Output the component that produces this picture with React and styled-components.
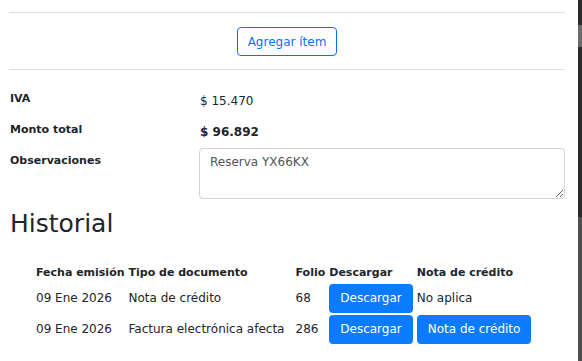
import React from "react";
import styled, { createGlobalStyle } from "styled-components";

const FONT = `"DejaVu Sans", "Open Sans", sans-serif`;

const HISTORY = [
  { id: 1, date: "09 Ene 2026", type: "Nota de crédito", folio: "68", credit: null },
  { id: 2, date: "09 Ene 2026", type: "Factura electrónica afecta", folio: "286", credit: "Nota de crédito" },
];

const GlobalStyle = createGlobalStyle`
  body {
    margin: 0;
    background: #fff;
    font-family: ${FONT};
    color: #212529;
  }
`;

const Page = () => {
  return (
    <Frame>
      <GlobalStyle />
      <Content>
        <Divider />
        <AddRow>
          <OutlineBtn>Agregar ítem</OutlineBtn>
        </AddRow>
        <Divider />
        <Summary>
          <Label>IVA</Label>
          <Value>$ 15.470</Value>
          <Label>Monto total</Label>
          <Value bold>$ 96.892</Value>
          <Label>Observaciones</Label>
          <Notes defaultValue="Reserva YX66KX" />
        </Summary>
        <Heading>Historial</Heading>
        <Table>
          <thead>
            <tr>
              <Th>Fecha emisión</Th>
              <Th $w={163}>Tipo de documento</Th>
              <Th>Folio</Th>
              <Th>Descargar</Th>
              <Th>Nota de crédito</Th>
            </tr>
          </thead>
          <tbody>
            {HISTORY.map(item => (
              <tr key={item.id}>
                <Td>{item.date}</Td>
                <Td>{item.type}</Td>
                <Td>{item.folio}</Td>
                <Td><SolidBtn>Descargar</SolidBtn></Td>
                <Td>{item.credit ? <SolidBtn>{item.credit}</SolidBtn> : "No aplica"}</Td>
              </tr>
            ))}
          </tbody>
        </Table>
      </Content>
      <Backdrop />
    </Frame>
  );
};

const Frame = styled.div`
  display: flex;
  width: 582px;
  height: 361px;
  overflow: hidden;
`;

const Content = styled.div`
  flex: 1;
  padding: 12px 13px 0 9px;
`;

const Backdrop = styled.div`
  width: 4px;
  background: linear-gradient(#2b2b2b 0 7%, #6a6a6a 7% 13%, #2b2b2b 13% 60%, #4f4f4f 60% 100%);
`;

const Divider = styled.hr`
  margin: 0;
  border: 0;
  border-top: 1px solid #e0e0e0;
`;

const AddRow = styled.div`
  display: flex;
  justify-content: center;
  padding: 14px 0 13px;
`;

const OutlineBtn = styled.button`
  height: 29px;
  padding: 0 10px;
  border: 1px solid #0d6efd;
  border-radius: 4px;
  background: #fff;
  color: #0d6efd;
  font-family: ${FONT};
  font-size: 12px;
`;

const Summary = styled.div`
  display: grid;
  grid-template-columns: 190px 1fr;
  row-gap: 11px;
  padding: 20px 0 0 1px;
  align-items: start;
`;

const Label = styled.div`
  font-size: 11px;
  font-weight: 700;
  line-height: 17px;
`;

const Value = styled.div`
  font-size: 12px;
  font-weight: ${p => (p.bold ? 700 : 400)};
  line-height: 17px;
  padding-top: 3px;
`;

const Notes = styled.textarea`
  margin: -4px 0 0 -1px;
  height: 51px;
  box-sizing: border-box;
  padding: 6px 10px;
  border: 1px solid #ced4da;
  border-radius: 4px;
  font-family: ${FONT};
  font-size: 12px;
  color: #555;
  resize: vertical;
`;

const Heading = styled.h2`
  margin: 10px 0 0 1px;
  font-size: 25px;
  font-weight: 400;
  line-height: 30px;
`;

const Table = styled.table`
  margin: 24px 0 0 25px;
  border-collapse: collapse;
  font-size: 12px;
`;

const Th = styled.th`
  padding: 3px 2px;
  text-align: left;
  font-size: 11px;
  font-weight: 700;
  white-space: nowrap;
  ${p => p.$w && `width: ${p.$w}px;`}
`;

const Td = styled.td`
  padding: 1px 2px 0;
  height: 30px;
  white-space: nowrap;
`;

const SolidBtn = styled.button`
  height: 29px;
  padding: 0 11px;
  border: 0;
  border-radius: 4px;
  background: #0d7bff;
  color: #fff;
  font-family: ${FONT};
  font-size: 12px;
`;

export default Page;
